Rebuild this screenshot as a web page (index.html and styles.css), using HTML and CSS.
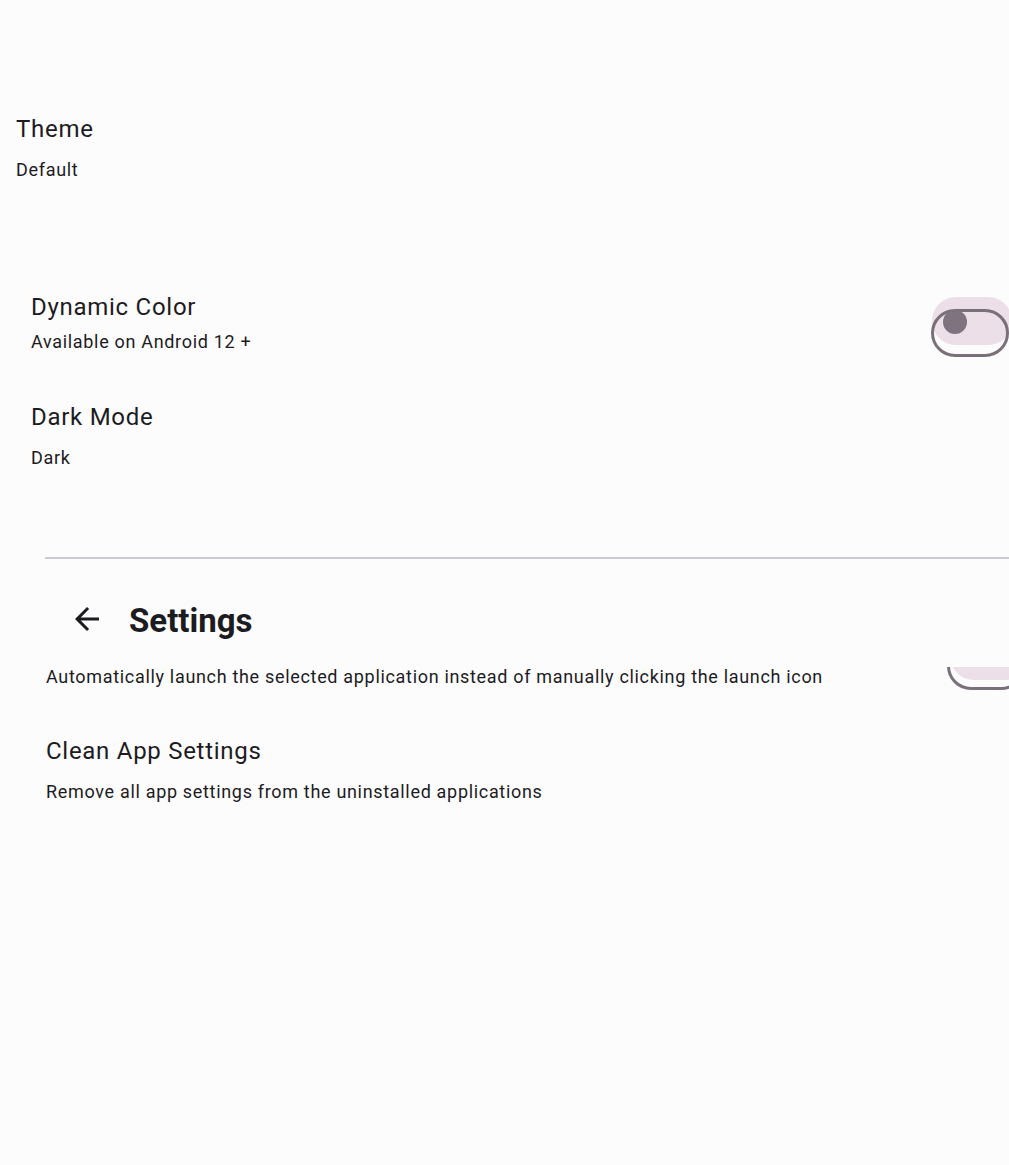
FILE: index.html
```html
<!DOCTYPE html>
<html lang="en">
<head>
<meta charset="utf-8">
<title>Settings</title>
<link rel="stylesheet" href="styles.css">
</head>
<body>
<main class="screen">
  <section class="theme">
    <div class="title">Theme</div>
    <div class="sub sub-gap-theme">Default</div>
  </section>

  <section class="appearance">
    <div class="row row-dynamic">
      <div class="texts">
        <div class="title">Dynamic Color</div>
        <div class="sub sub-gap-sm">Available on Android 12 +</div>
      </div>
      <div class="switch switch-first"><span class="thumb"></span></div>
    </div>
    <div class="item item-dark">
      <div class="title">Dark Mode</div>
      <div class="sub sub-gap">Dark</div>
    </div>
  </section>

  <section class="general">
    <div class="divider"></div>
    <header class="appbar">
      <button class="icon-btn" aria-label="Back">
        <svg width="36" height="36" viewBox="0 0 24 24"><path d="M20 11H7.83l5.59-5.59L12 4l-8 8 8 8 1.41-1.41L7.83 13H20v-2z" fill="#1c1b1f"/></svg>
      </button>
      <h1 class="appbar-title">Settings</h1>
    </header>
    <div class="row row-auto">
      <div class="sub">Automatically launch the selected application instead of manually clicking the launch icon</div>
      <div class="switch switch-second"><span class="thumb"></span></div>
    </div>
    <div class="item item-clean">
      <div class="title">Clean App Settings</div>
      <div class="sub sub-gap">Remove all app settings from the uninstalled applications</div>
    </div>
  </section>
</main>
</body>
</html>
```

FILE: styles.css
```css
html, body {
  margin: 0;
  padding: 0;
  overflow: hidden;
  background: #fcfcfc;
}

.screen {
  width: 1009px;
  height: 1165px;
  font-family: Roboto, "Noto Sans", sans-serif;
  color: #1c1b1f;
}

.title {
  font-size: 24px;
  line-height: 32px;
  letter-spacing: 0.72px;
}

.sub {
  font-size: 18px;
  line-height: 24px;
  letter-spacing: 0.68px;
  white-space: nowrap;
}

.sub-gap { margin-top: 12px; }
.sub-gap-theme { margin-top: 13px; }
.sub-gap-sm { margin-top: 7px; }

.theme {
  padding-top: 113px;
  padding-left: 16px;
}

.appearance {
  padding-left: 31px;
  margin-top: 109px;
}

.row {
  display: flex;
  align-items: flex-start;
  justify-content: space-between;
}

.item-dark { margin-top: 44px; }
.item-dark .sub-gap { margin-top: 12.5px; }

.general {
  padding-left: 45px;
  margin-top: 87.5px;
}

.divider {
  height: 2px;
  background: #cdc8d6;
  margin-right: -20px;
}

.appbar {
  position: relative;
  z-index: 2;
  display: flex;
  align-items: center;
  height: 96px;
  margin-top: 12px;
  margin-right: -40px;
  background: #fcfcfc;
}

.icon-btn {
  width: 72px;
  height: 72px;
  margin-left: 6px;
  padding: 0;
  border: 0;
  background: transparent;
  display: flex;
  align-items: center;
  justify-content: center;
}

.appbar-title {
  margin: 0 0 0 6px;
  padding-top: 4px;
  font-size: 33px;
  line-height: 40px;
  font-weight: 700;
  color: #1c1b1f;
}

.row-auto {
  margin-top: -2px;
  padding-left: 1px;
}

.item-clean {
  margin-top: 45px;
  padding-left: 1px;
}

.item-clean .sub-gap { margin-top: 13px; }

.switch {
  position: relative;
  flex: none;
  width: 78px;
  height: 48px;
}

.switch::before {
  content: "";
  position: absolute;
  left: 1px;
  top: -12px;
  width: 80px;
  height: 48px;
  border-radius: 24px;
  background: #ecdfe8;
}

.switch::after {
  content: "";
  position: absolute;
  inset: 0;
  border: 3px solid #7a7079;
  border-radius: 24px;
}

.thumb {
  position: absolute;
  z-index: 1;
  left: 12px;
  top: 1px;
  width: 24px;
  height: 24px;
  border-radius: 50%;
  background: #7e737e;
}

.switch-first { margin-top: 18px; }

.switch-second {
  margin-top: -23px;
  margin-right: -16px;
}

.switch-second::before {
  top: -10px;
  left: 3px;
}
```
